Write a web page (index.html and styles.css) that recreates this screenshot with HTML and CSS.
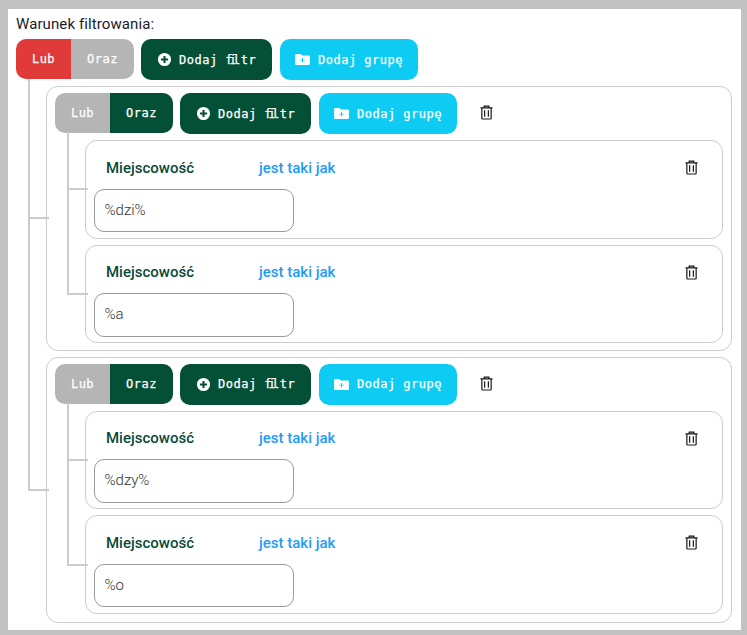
FILE: index.html
```html
<!DOCTYPE html>
<html lang="pl">
<head>
<meta charset="utf-8">
<title>Warunek filtrowania</title>
<link rel="stylesheet" href="styles.css">
</head>
<body>
<svg class="sprite" width="0" height="0" aria-hidden="true">
  <symbol id="plus-circle" viewBox="0 0 16 16">
    <path fill="currentColor" d="M8 1a7 7 0 1 1 0 14A7 7 0 0 1 8 1zm-1.100 3.200v2.700H4.200v2.200h2.700v2.700h2.200V9.100h2.700V6.900H9.100V4.200z" fill-rule="evenodd"/>
  </symbol>
  <symbol id="folder-plus" viewBox="0 0 16 14">
    <path fill="currentColor" fill-rule="evenodd" d="M1.400 1h4.400l1.600 1.700h7.200c.8 0 1.400.6 1.400 1.300v7.600c0 .8-.6 1.400-1.400 1.400H1.400C.6 13 0 12.400 0 11.600V2.400C0 1.600.6 1 1.400 1zM7.500 5.300v1.900H5.600v1h1.900v1.900h1V8.200h1.900v-1H8.500V5.300z"/>
  </symbol>
  <symbol id="trash" viewBox="0 0 14 16">
    <path fill="none" stroke="currentColor" stroke-width="1.300" d="M.5 3h13M4.500 3V1.200h5V3M2 3v11.300c0 .4.300.7.700.7h8.600c.4 0 .7-.3.700-.7V3M5 5.500V12.500M9 5.500V12.500"/>
  </symbol>
</svg>

<main class="frame">
  <div class="title">Warunek filtrowania:</div>
  <div class="toolbar">
    <div class="segment"><span class="seg seg-lub seg-red">Lub</span><span class="seg seg-oraz seg-off">Oraz</span></div>
    <button class="btn btn-green"><svg class="ico-plus"><use href="#plus-circle"/></svg><span>Dodaj <span class="lig">fi</span>ltr</span></button>
    <button class="btn btn-cyan"><svg class="ico-folder"><use href="#folder-plus"/></svg>Dodaj grupę</button>
  </div>

  <div class="tree tree-root">
    <section class="group node">
      <div class="toolbar">
        <div class="segment"><span class="seg seg-lub seg-off">Lub</span><span class="seg seg-oraz seg-green">Oraz</span></div>
        <button class="btn btn-green"><svg class="ico-plus"><use href="#plus-circle"/></svg><span>Dodaj <span class="lig">fi</span>ltr</span></button>
        <button class="btn btn-cyan"><svg class="ico-folder"><use href="#folder-plus"/></svg>Dodaj grupę</button>
        <svg class="ico-trash group-trash"><use href="#trash"/></svg>
      </div>
      <div class="tree">
        <div class="rule node">
          <div class="rule-head"><span class="field">Miejscowość</span><span class="op">jest taki jak</span><svg class="ico-trash rule-trash"><use href="#trash"/></svg></div>
          <div class="value">%dzi%</div>
        </div>
        <div class="rule node">
          <div class="rule-head"><span class="field">Miejscowość</span><span class="op">jest taki jak</span><svg class="ico-trash rule-trash"><use href="#trash"/></svg></div>
          <div class="value">%a</div>
        </div>
      </div>
    </section>

    <section class="group group-last node">
      <div class="toolbar">
        <div class="segment"><span class="seg seg-lub seg-off">Lub</span><span class="seg seg-oraz seg-green">Oraz</span></div>
        <button class="btn btn-green"><svg class="ico-plus"><use href="#plus-circle"/></svg><span>Dodaj <span class="lig">fi</span>ltr</span></button>
        <button class="btn btn-cyan"><svg class="ico-folder"><use href="#folder-plus"/></svg>Dodaj grupę</button>
        <svg class="ico-trash group-trash"><use href="#trash"/></svg>
      </div>
      <div class="tree">
        <div class="rule node">
          <div class="rule-head"><span class="field">Miejscowość</span><span class="op">jest taki jak</span><svg class="ico-trash rule-trash"><use href="#trash"/></svg></div>
          <div class="value">%dzy%</div>
        </div>
        <div class="rule node">
          <div class="rule-head"><span class="field">Miejscowość</span><span class="op">jest taki jak</span><svg class="ico-trash rule-trash"><use href="#trash"/></svg></div>
          <div class="value">%o</div>
        </div>
      </div>
    </section>
  </div>
</main>
</body>
</html>
```
FILE: styles.css
```css
* { box-sizing: border-box; }

html, body { margin: 0; padding: 0; }

body {
  width: 747px;
  height: 635px;
  overflow: hidden;
  background: #c2c2c2;
  padding: 9px 6px 5px 8px;
  font-family: Roboto, "Liberation Sans", sans-serif;
  font-size: 15px;
}

.sprite { position: absolute; }

.frame {
  height: 621px;
  background: #fff;
  padding: 6px 9px 0 8px;
}

.title {
  height: 24px;
  line-height: 18px;
  color: #1a1a2a;
  letter-spacing: 0.1px;
}

.toolbar {
  display: flex;
  align-items: flex-start;
  height: 41px;
}

.segment {
  display: flex;
  width: 118px;
  height: 40px;
  border-radius: 10px;
  overflow: hidden;
  margin-right: 7px;
}

.seg {
  display: flex;
  align-items: center;
  justify-content: center;
  font-family: "DejaVu Sans Mono", "Liberation Mono", monospace;
  font-size: 12px;
  font-weight: 400;
  letter-spacing: 0.5px;
  -webkit-text-stroke: 0.25px #fff;
  color: #fff;
}

.seg-lub { width: 55px; }
.seg-oraz { width: 63px; }
.seg-red { background: #e03a3a; }
.seg-off { background: #b5b5b5; }
.seg-green { background: #045036; }

.btn {
  display: flex;
  align-items: center;
  height: 41px;
  padding: 0;
  border: 0;
  border-radius: 10px;
  font-family: "DejaVu Sans Mono", "Liberation Mono", monospace;
  font-size: 12px;
  font-weight: 400;
  letter-spacing: 0.5px;
  -webkit-text-stroke: 0.25px #fff;
  color: #fff;
}

.lig { letter-spacing: -3.35px; }

.btn-green {
  width: 131px;
  padding-left: 16px;
  margin-right: 8px;
  background: #045036;
}

.btn-cyan {
  width: 138px;
  padding-left: 15px;
  background: #0dcbf2;
}

.ico-plus {
  width: 15px;
  height: 15px;
  margin-right: 7px;
  color: #fff;
}

.ico-folder {
  width: 15px;
  height: 13px;
  margin-right: 8px;
  color: #fff;
}

.ico-trash {
  width: 13px;
  height: 15px;
  color: #16181c;
  flex: none;
}

.group-trash { margin: 12px 0 0 23px; }

.tree {
  position: relative;
  display: flex;
  flex-direction: column;
}

.tree-root {
  padding: 6px 0 0 30px;
  gap: 6px;
}

.group .tree {
  padding-left: 30px;
  gap: 6px;
  margin-top: 6px;
}

.node { position: relative; }

.node::before {
  content: "";
  position: absolute;
  left: -19px;
  width: 19px;
  bottom: calc(50% - 1px);
  border-left: 2px solid #ccc;
  border-bottom: 2px solid #ccc;
}

.tree-root > .node:nth-child(1)::before { height: 138px; }
.tree-root > .node:nth-child(2)::before { height: 272px; }
.group .tree > .node:nth-child(1)::before { height: 56px; }
.group .tree > .node:nth-child(2)::before { height: 160px; }

.group {
  border: 1px solid #ccc;
  border-radius: 12px;
  padding: 6px 8px 6.5px 8px;
  background: #fff;
}

.group-last { padding-bottom: 8px; }

.rule {
  height: 98.6px;
  border: 1px solid #ccc;
  border-radius: 12px;
  padding: 17.5px 8px 0 8px;
}

.rule-head {
  display: flex;
  align-items: center;
  height: 18px;
  padding-left: 12px;
}

.field {
  width: 153px;
  color: #0a4a3a;
  font-weight: 500;
}

.op {
  color: #1e9bfb;
  font-weight: 500;
}

.rule-trash { margin-left: auto; margin-right: 16.5px; }

.value {
  width: 200px;
  height: 43.5px;
  margin-top: 12px;
  border: 1px solid #999;
  border-radius: 10px;
  padding: 0 9.5px;
  line-height: 41.5px;
  font-weight: 300;
  color: #333;
}
```
